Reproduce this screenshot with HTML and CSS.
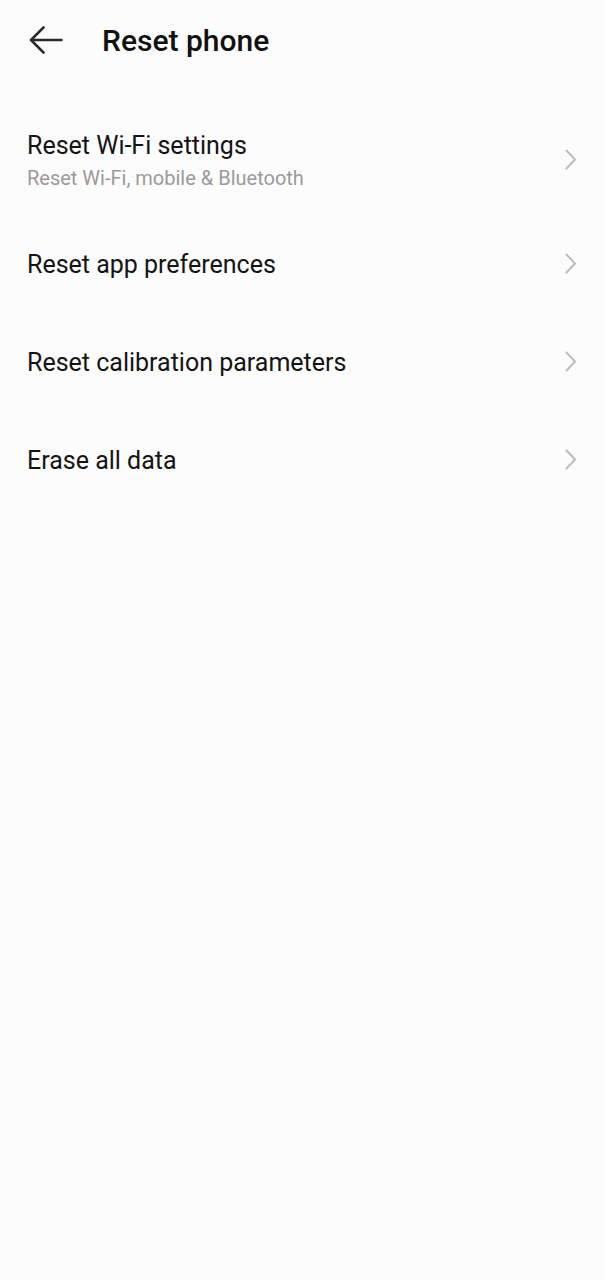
FILE: index.html
```html
<!DOCTYPE html>
<html>
<head>
<meta charset="utf-8">
<link rel="stylesheet" href="styles.css">
</head>
<body>
<header class="topbar">
  <svg class="back" width="36" height="30" viewBox="0 0 36 30">
    <path d="M33.5 15 H3.5 M15.5 2.5 L3 15 L15.5 27.5" fill="none" stroke="#2b2b2b" stroke-width="2.6" stroke-linecap="round" stroke-linejoin="round"/>
  </svg>
  <h1 class="title">Reset phone</h1>
</header>
<main class="list">
  <div class="row row-two">
    <div class="texts">
      <div class="label">Reset Wi-Fi settings</div>
      <div class="sub">Reset Wi-Fi, mobile &amp; Bluetooth</div>
    </div>
    <svg class="chev" width="12" height="21" viewBox="0 0 12 21"><path d="M1.5 1.5 L10 10.5 L1.5 19.5" fill="none" stroke="#bdbdbd" stroke-width="2" stroke-linecap="round" stroke-linejoin="round"/></svg>
  </div>
  <div class="row">
    <div class="label">Reset app preferences</div>
    <svg class="chev" width="12" height="21" viewBox="0 0 12 21"><path d="M1.5 1.5 L10 10.5 L1.5 19.5" fill="none" stroke="#bdbdbd" stroke-width="2" stroke-linecap="round" stroke-linejoin="round"/></svg>
  </div>
  <div class="row">
    <div class="label">Reset calibration parameters</div>
    <svg class="chev" width="12" height="21" viewBox="0 0 12 21"><path d="M1.5 1.5 L10 10.5 L1.5 19.5" fill="none" stroke="#bdbdbd" stroke-width="2" stroke-linecap="round" stroke-linejoin="round"/></svg>
  </div>
  <div class="row">
    <div class="label">Erase all data</div>
    <svg class="chev" width="12" height="21" viewBox="0 0 12 21"><path d="M1.5 1.5 L10 10.5 L1.5 19.5" fill="none" stroke="#bdbdbd" stroke-width="2" stroke-linecap="round" stroke-linejoin="round"/></svg>
  </div>
</main>
</body>
</html>
```

FILE: styles.css
```css
html, body {
  margin: 0;
  padding: 0;
  background: #fcfcfc;
  font-family: Roboto, "Noto Sans", "Liberation Sans", sans-serif;
  color: #111111;
}
body {
  width: 605px;
  min-height: 1280px;
}
.topbar {
  height: 82px;
  display: flex;
  align-items: center;
  padding-left: 28px;
  box-sizing: border-box;
}
.back {
  display: block;
  flex: none;
  margin-top: -2px;
}
.title {
  margin: 0 0 0 38px;
  font-size: 30px;
  font-weight: 500;
  line-height: 34px;
  color: #111111;
}
.list {
  margin-top: 18px;
}
.row {
  display: flex;
  align-items: center;
  justify-content: space-between;
  padding: 34px 28px 34px 27px;
}
.row-two {
  padding-top: 31px;
  padding-bottom: 25px;
}
.label {
  font-size: 25px;
  line-height: 30px;
  color: #141414;
}
.sub {
  margin-top: 4px;
  font-size: 20px;
  line-height: 26px;
  color: #9a9a9a;
}
.chev {
  display: block;
  flex: none;
  margin-top: -4px;
}
```
